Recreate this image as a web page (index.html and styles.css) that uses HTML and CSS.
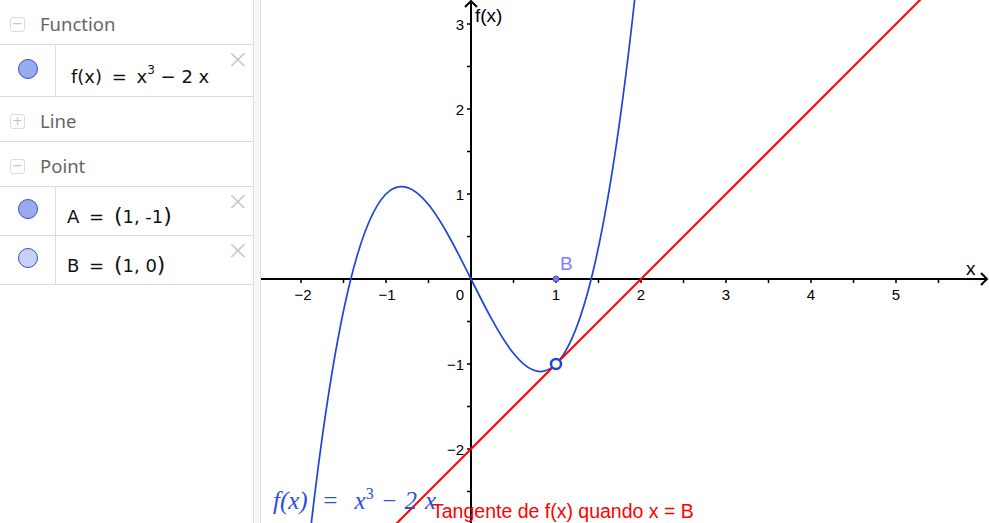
FILE: index.html
```html
<!DOCTYPE html>
<html>
<head>
<meta charset="utf-8">
<link rel="stylesheet" href="styles.css">
</head>
<body>
<div class="app">
  <div class="sidebar">
    <div class="header">
      <span class="toggle">−</span><span class="htext">Function</span>
    </div>
    <div class="item item-tall">
      <div class="dotcol"><span class="dot"></span></div>
      <div class="formula f-func">f(x) <span class="eq">=</span> x<sup>3</sup> − 2 x</div>
      <span class="close">×</span>
    </div>
    <div class="header">
      <span class="toggle">+</span><span class="htext">Line</span>
    </div>
    <div class="header">
      <span class="toggle">−</span><span class="htext">Point</span>
    </div>
    <div class="item">
      <div class="dotcol"><span class="dot"></span></div>
      <div class="formula">A <span class="eq">=</span> <span class="par">(</span>1, -1<span class="par">)</span></div>
      <span class="close">×</span>
    </div>
    <div class="item">
      <div class="dotcol"><span class="dot dot-light"></span></div>
      <div class="formula">B <span class="eq">=</span> <span class="par">(</span>1, 0<span class="par">)</span></div>
      <span class="close">×</span>
    </div>
  </div>
  <div class="divider"></div>
  <div class="graph">
    <svg class="canvas" width="728" height="523" viewBox="0 0 728 523">
      <g class="ticks" stroke="#000" stroke-width="1.5">
        <path d="M40 279v4M82.5 279v4M125 279v4M167.5 279v4M252.5 279v4M295 279v4M337.5 279v4M380 279v4M422.5 279v4M465 279v4M507.5 279v4M550 279v4M592.5 279v4M635 279v4M677.5 279v4"/>
        <path d="M206 24h4M206 66.5h4M206 109h4M206 151.5h4M206 194h4M206 236.5h4M206 321.5h4M206 364h4M206 406.5h4M206 449h4M206 491.5h4"/>
      </g>
      <g stroke="#000" stroke-width="2" fill="none">
        <path d="M0 279H726"/>
        <path d="M720 273L726 279L720 285"/>
        <path d="M210 523V1"/>
        <path d="M204 7L210 1L216 7"/>
      </g>
      <g class="axlab">
        <text x="42" y="300" text-anchor="middle">−2</text>
        <text x="126" y="300" text-anchor="middle">−1</text>
        <text x="199" y="300" text-anchor="middle">0</text>
        <text x="295" y="300" text-anchor="middle">1</text>
        <text x="380" y="300" text-anchor="middle">2</text>
        <text x="465" y="300" text-anchor="middle">3</text>
        <text x="550" y="300" text-anchor="middle">4</text>
        <text x="635" y="300" text-anchor="middle">5</text>
        <text x="203" y="30" text-anchor="end">3</text>
        <text x="203" y="115" text-anchor="end">2</text>
        <text x="203" y="200" text-anchor="end">1</text>
        <text x="203" y="370" text-anchor="end">−1</text>
        <text x="203" y="455" text-anchor="end">−2</text>
      </g>
      <text class="axname" x="214" y="22">f(x)</text>
      <text class="axname" x="705" y="275">x</text>
      <path d="M48.5 539C157.58 -424.19 266.67 1006.44 375.75 -19.76" fill="none" stroke="#1f45d8" stroke-width="1.7"/>
      <path d="M125 534L805 -146" stroke="#ff0000" stroke-width="2"/>
      <circle cx="295" cy="279" r="3" fill="#7a7af0" stroke="#4a4ad0" stroke-width="1"/>
      <text class="blabel" x="299" y="270">B</text>
      <circle cx="295" cy="364" r="5" fill="#fff" stroke="#1f45d8" stroke-width="2.5"/>
      <text class="flabel" x="12" y="509">f(x)<tspan dx="14">=</tspan><tspan dx="16">x</tspan><tspan class="sup" dy="-10">3</tspan><tspan dy="10" dx="7">−</tspan><tspan dx="7">2</tspan><tspan dx="8">x</tspan></text>
      <text class="tlabel" x="171" y="518">Tangente de f(x) quando x = B</text>
    </svg>
  </div>
</div>
</body>
</html>
```
FILE: styles.css
```css
html, body {
  margin: 0;
  padding: 0;
  background: #fff;
  overflow: hidden;
}
.app {
  display: flex;
  width: 989px;
  height: 523px;
}
.sidebar {
  width: 253px;
  border-right: 1px solid #dcdcdc;
  flex: none;
  font-family: "Noto Sans", "DejaVu Sans", sans-serif;
}
.divider {
  width: 6px;
  flex: none;
  background: #f7f7f7;
  border-right: 1px solid #dcdcdc;
}
.graph {
  flex: 1;
  overflow: hidden;
  height: 523px;
}
.canvas {
  display: block;
}
.header {
  height: 45px;
  border-bottom: 1px solid #dcdcdc;
  display: flex;
  align-items: center;
  box-sizing: border-box;
  padding-left: 10px;
  padding-top: 4px;
}
.toggle {
  width: 13px;
  height: 13px;
  border: 1px solid #dcdcdc;
  border-radius: 3px;
  color: #c0c0c0;
  font-size: 13px;
  line-height: 12px;
  text-align: center;
  font-family: "DejaVu Sans", sans-serif;
  margin-right: 15px;
}
.htext {
  font-size: 18.5px;
  color: #666;
  position: relative;
  top: -1px;
}
.item {
  position: relative;
  height: 49px;
  border-bottom: 1px solid #dcdcdc;
  display: flex;
  box-sizing: border-box;
}
.item-tall {
  height: 52px;
}
.dotcol {
  width: 56px;
  border-right: 1px solid #dcdcdc;
  flex: none;
  display: flex;
  justify-content: center;
  padding-top: 12px;
  box-sizing: border-box;
}
.item-tall .dotcol {
  padding-top: 14px;
}
.dot {
  width: 18px;
  height: 18px;
  border-radius: 50%;
  background: #99aaee;
  border: 1px solid #3050d8;
}
.dot-light {
  background: #c8d0f8;
}
.formula {
  font-family: "DejaVu Sans", sans-serif;
  font-size: 18px;
  color: #111;
  padding-left: 11px;
  padding-top: 19px;
  white-space: nowrap;
}
.f-func {
  padding-left: 15px;
  padding-top: 21px;
}
.formula sup {
  font-size: 12px;
  vertical-align: 9px;
  line-height: 0;
}
.par {
  font-size: 22px;
  line-height: 0;
}
.eq {
  padding: 0 4px;
}
.close {
  position: absolute;
  right: 4px;
  top: 0px;
  font-family: "DejaVu Sans", sans-serif;
  font-size: 27px;
  line-height: 27px;
  color: #c4c4c4;
  font-weight: 200;
}
.axlab {
  font-family: "Liberation Sans", sans-serif;
  font-size: 15px;
  fill: #000;
}
.axname {
  font-family: "Liberation Sans", sans-serif;
  font-size: 19px;
  fill: #000;
}
.blabel {
  font-family: "Liberation Sans", sans-serif;
  font-size: 19px;
  fill: #8080ff;
}
.flabel {
  font-family: "Liberation Serif", serif;
  font-style: italic;
  font-size: 25px;
  fill: #2a4fe0;
}
.flabel .sup {
  font-size: 16px;
  font-style: normal;
}
.tlabel {
  font-family: "Liberation Sans", sans-serif;
  font-size: 19.5px;
  fill: #ff0000;
}
```
